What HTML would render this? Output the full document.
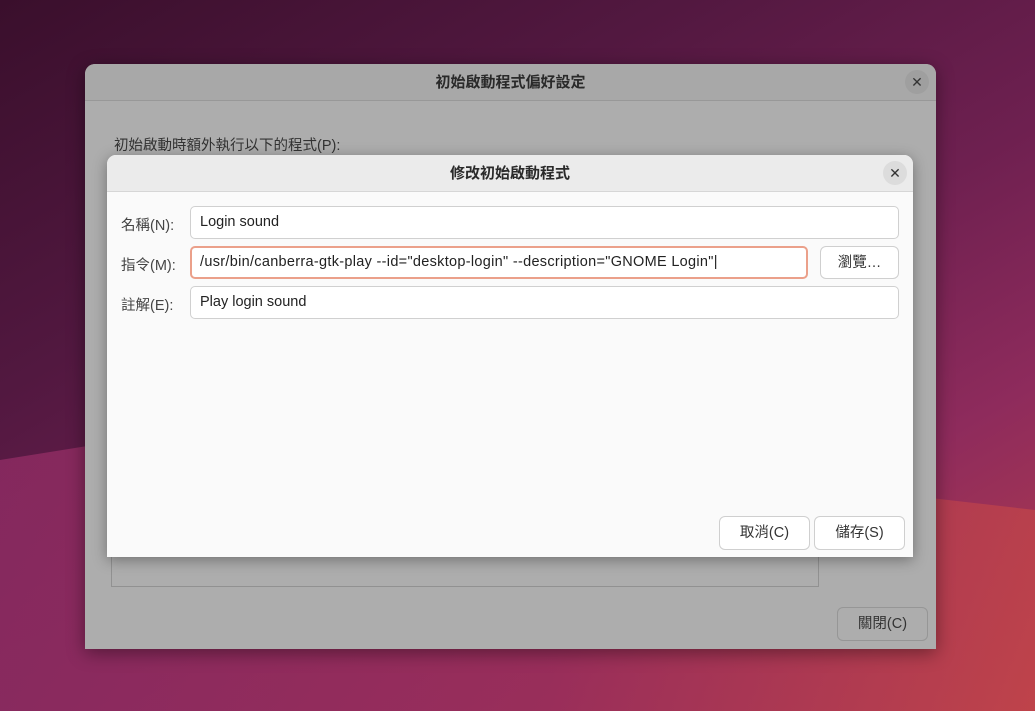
<!DOCTYPE html>
<html><head><meta charset="utf-8"><style>
*{box-sizing:border-box;margin:0;padding:0}
body{width:1035px;height:711px;overflow:hidden;position:relative;font-family:"Liberation Sans","Noto Sans CJK TC",sans-serif;font-size:14px;color:#333;
background:linear-gradient(150deg,#3a0f2c 0%,#521840 30%,#6e2050 55%,#8e2b5c 75%,#b73e4c 100%);}
.bg1{position:absolute;left:0;top:420px;width:1035px;height:291px;background:linear-gradient(100deg,#8c2b62 0%,#9a2e5a 55%,#c0444a 100%);clip-path:polygon(0 40px,250px 0,1035px 90px,1035px 291px,0 291px);opacity:.85}
.outer{position:absolute;left:85px;top:64px;width:851px;height:585px;background:#adadad;border-radius:10px 10px 0 0;box-shadow:0 4px 18px rgba(0,0,0,.4)}
.outer .hd{height:37px;background:#a8a8a8;border-bottom:1px solid #989898;border-radius:10px 10px 0 0;text-align:center;line-height:37px;font-weight:bold;color:#2a2a2a;font-size:15px}
.x{position:absolute;width:24px;height:24px;border-radius:12px;text-align:center;line-height:24px;font-size:14px;color:#333}
.inner{position:absolute;left:107px;top:155px;width:806px;height:402px;background:#fafafa;border-radius:9px 9px 0 0;box-shadow:0 3px 14px rgba(0,0,0,.35)}
.inner .hd{height:37px;background:#ebebeb;border-bottom:1px solid #d6d6d6;border-radius:9px 9px 0 0;text-align:center;line-height:37px;font-weight:bold;color:#2a2a2a;font-size:15px}
.lbl{position:absolute;left:14px;color:#444;font-size:14.5px}
.ent{position:absolute;left:83px;width:709px;height:33px;background:#fff;border:1px solid #d0d0d0;border-radius:5px;padding-left:9px;line-height:31px;color:#222;font-size:14.5px}
.btn{position:absolute;height:34px;background:#fff;border:1px solid #cfcfcf;border-radius:6px;text-align:center;line-height:32px;color:#333;font-size:14.5px}
</style></head><body>
<div class="bg1"></div>
<div class="outer">
 <div class="hd">初始啟動程式偏好設定</div>
 <div class="x" style="left:820px;top:6px;background:#9f9f9f">✕</div>
 <div style="position:absolute;left:29px;top:70px;color:#333;font-size:14.5px">初始啟動時額外執行以下的程式(P):</div>
 <div style="position:absolute;left:26px;top:480px;width:708px;height:43px;border:1px solid #919191;border-top:none"></div>
 <div class="btn" style="left:752px;top:543px;width:91px;background:#adadad;border-color:#969696">關閉(C)</div>
</div>
<div class="inner">
 <div class="hd">修改初始啟動程式</div>
 <div class="x" style="left:776px;top:6px;background:#dcdcdc">✕</div>
 <div class="lbl" style="top:59px">名稱(N):</div>
 <div class="ent" style="top:51px">Login sound</div>
 <div class="lbl" style="top:99px">指令(M):</div>
 <div class="ent" style="top:91px;width:618px;border:2px solid #eba08a;padding-left:8px;line-height:29px;letter-spacing:0.3px">/usr/bin/canberra-gtk-play --id="desktop-login" --description="GNOME Login"|</div>
 <div class="btn" style="left:713px;top:91px;width:79px;height:33px">瀏覽…</div>
 <div class="lbl" style="top:139px">註解(E):</div>
 <div class="ent" style="top:131px">Play login sound</div>
 <div class="btn" style="left:612px;top:361px;width:91px">取消(C)</div>
 <div class="btn" style="left:707px;top:361px;width:91px">儲存(S)</div>
</div>
</body></html>
